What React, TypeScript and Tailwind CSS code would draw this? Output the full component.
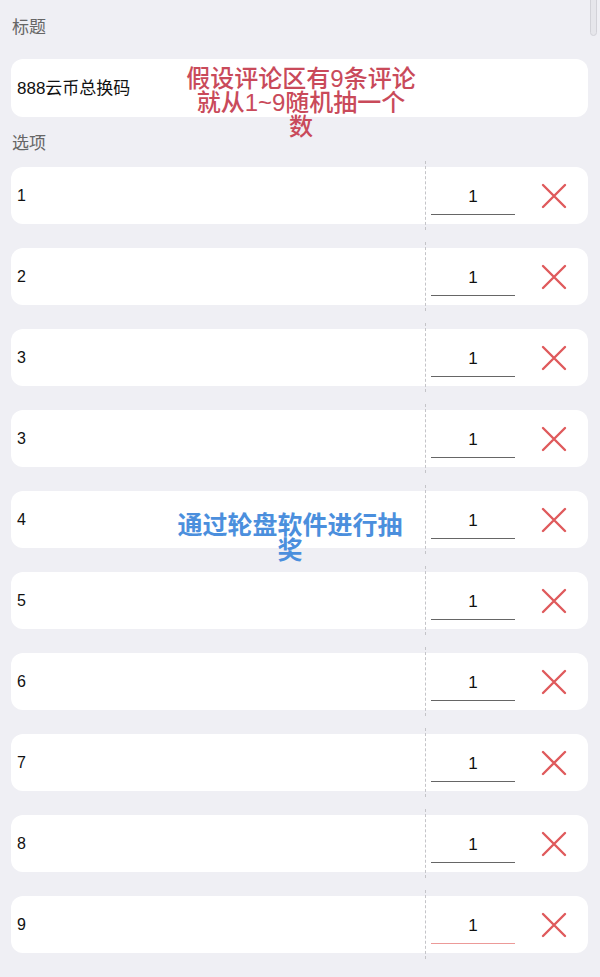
import React from "react";

const FONT = { fontFamily: '"Liberation Sans", "Noto Sans CJK SC", sans-serif' };

const rows = ["1", "2", "3", "3", "4", "5", "6", "7", "8", "9"];

function XIcon() {
  return (
    <svg width="26" height="26" viewBox="0 0 26 26" className="shrink-0">
      <path d="M2 2 L24 24 M24 2 L2 24" stroke="#df5a5c" strokeWidth="2.4" strokeLinecap="round" fill="none" />
    </svg>
  );
}

function OptionRow({ label, active }: { label: string; active?: boolean }) {
  return (
    <div className="flex h-[57px] items-center rounded-[12px] bg-white">
      <div className="flex-1 pl-[6px] pt-px text-[16px] text-[#111]">{label}</div>
      <div className="-my-[6px] w-0 self-stretch border-l border-dashed border-[#c4c4c8]" />
      <div
        className={`ml-[5px] mt-[4px] flex h-[34px] w-[84px] items-center justify-center border-b-[1.5px] text-[17px] text-[#111] ${
          active ? "border-[#ec9a98]" : "border-[#666]"
        }`}
      >
        1
      </div>
      <div className="ml-[26px] mr-[21px] flex items-center">
        <XIcon />
      </div>
    </div>
  );
}

export default function App() {
  return (
    <div className="relative min-h-[977px] w-full overflow-hidden bg-[#efeff4] px-[11px] pr-[12px]" style={FONT}>
      {/* scrollbar thumb */}
      <div className="absolute right-[3px] top-[-4px] h-[40px] w-[7px] rounded-full border border-[#d2d2d8] bg-[#e6e6eb]" />

      <div className="pb-[19px] pl-px pt-[16px] text-[17px] leading-[24px] text-[#666]">标题</div>
      <div className="flex h-[58px] items-center rounded-[12px] bg-white pl-[6px] pt-px text-[17px] text-[#111]">
        888云币总换码
      </div>

      <div className="pb-[11px] pl-px pt-[15px] text-[17px] leading-[24px] text-[#666]">选项</div>
      <div className="flex flex-col gap-[24px]">
        {rows.map((r, i) => (
          <OptionRow key={i} label={r} active={i === rows.length - 1} />
        ))}
      </div>

      {/* annotations drawn over the screenshot */}
      <div className="pointer-events-none absolute left-[151px] top-[67px] w-[300px] text-center text-[24px] font-medium leading-[24px] text-[#c94a5a]">
        假设评论区有9条评论
        <br />
        就从1~9随机抽一个
        <br />数
      </div>
      <div className="pointer-events-none absolute left-[140px] top-[513px] w-[300px] text-center text-[25px] font-bold leading-[25px] text-[#4b8fdd]">
        通过轮盘软件进行抽
        <br />奖
      </div>
    </div>
  );
}
